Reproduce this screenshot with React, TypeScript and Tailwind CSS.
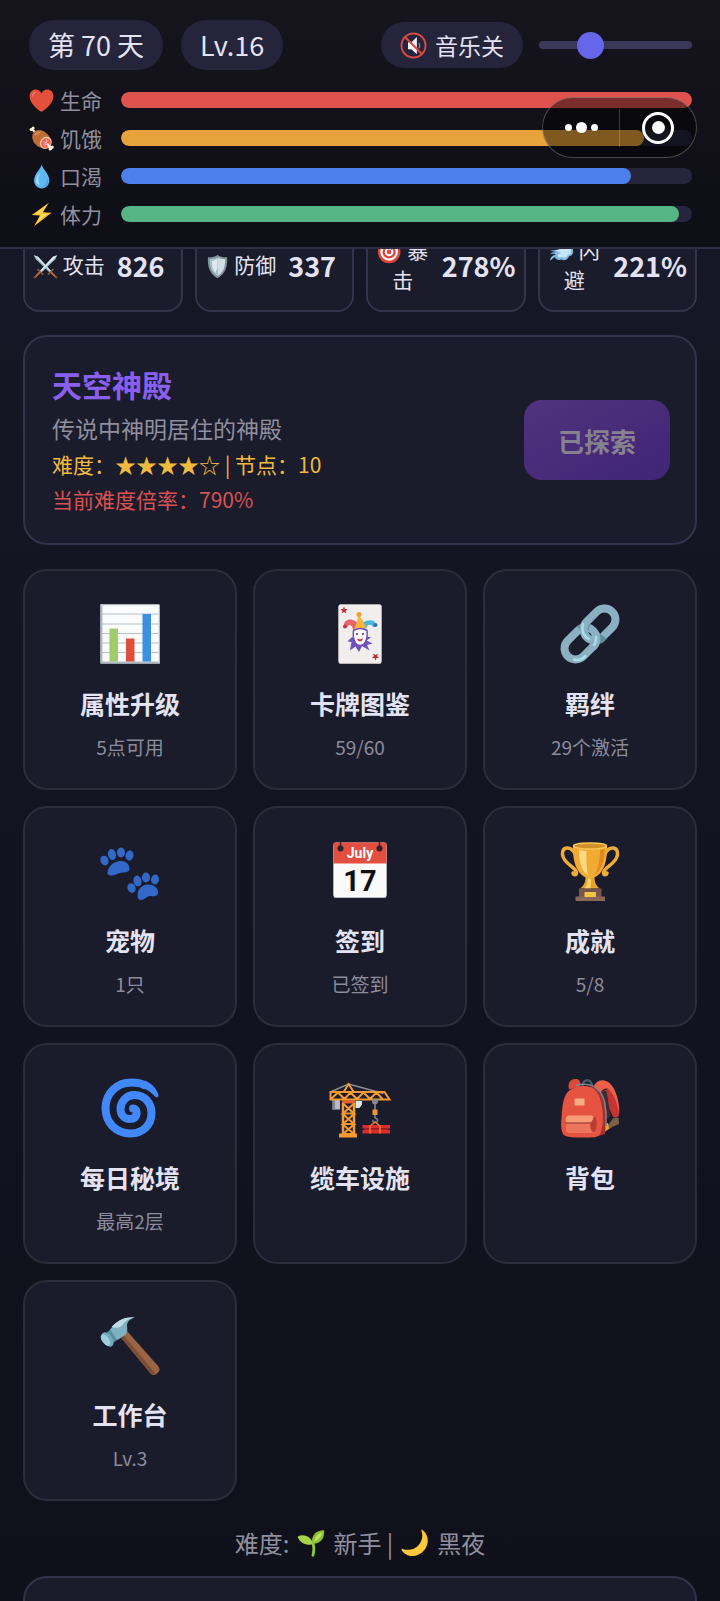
import { useState } from "react";
import type { ReactNode } from "react";

interface IconProps {
  className?: string;
}

interface Vital {
  label: string;
  percent: number;
  color: string;
  icon: ReactNode;
}

interface Stat {
  label: string;
  value: string;
  icon: ReactNode;
}

interface Feature {
  title: string;
  note?: string;
  icon: ReactNode;
}

const Svg = ({ className, children }: IconProps & { children: ReactNode }) => (
  <svg viewBox="0 0 128 128" className={className} fill="none" aria-hidden="true">
    {children}
  </svg>
);

/* ---------- small inline icons ---------- */

const HeartIcon = ({ className }: IconProps) => (
  <Svg className={className}>
    <path fill="#e5503c" d="M64 122C52 116 3 82 3 42 3 20 18 8 34 8c14 0 24 8 30 20C70 16 80 8 94 8c16 0 31 12 31 34 0 40-49 74-61 80z" />
    <path fill="#f27c66" d="M16 38c1-12 9-19 18-18 5 1 4 5 0 6-8 2-10 8-11 14-1 5-7 4-7-2z" />
  </Svg>
);

const MeatIcon = ({ className }: IconProps) => (
  <Svg className={className}>
    <path stroke="#f3e4d3" strokeWidth="11" strokeLinecap="round" d="M16 17l22 22M98 98l17 17" />
    <circle cx="11" cy="18" r="8" fill="#fff3e4" />
    <circle cx="21" cy="10" r="8" fill="#fff3e4" />
    <path fill="#bf6d35" d="M22 35c10-16 34-20 53-8 16 10 36 27 35 45L72 110C52 112 34 98 23 80 15 65 14 48 22 35z" />
    <path fill="#d78a4c" d="M31 38c9-10 24-11 36-4-14 0-26 6-36 18-3-4-3-9 0-14z" />
    <ellipse cx="86" cy="86" rx="29" ry="33" transform="rotate(40 86 86)" fill="#f5c4a8" />
    <ellipse cx="87" cy="87" rx="23" ry="26" transform="rotate(40 87 87)" fill="#ee5c50" />
    <path stroke="#f9c4b0" strokeWidth="4" d="M70 80l34 12M90 66l-8 42M72 98l28-24" />
    <path stroke="#fff3e4" strokeWidth="12" strokeLinecap="round" d="M96 96l14 14" />
    <circle cx="119" cy="108" r="8" fill="#fff3e4" />
    <circle cx="108" cy="118" r="8" fill="#fff3e4" />
  </Svg>
);

const DropIcon = ({ className }: IconProps) => (
  <Svg className={className}>
    <path fill="#5fb8f0" d="M65 3c5 24 39 48 39 82 0 23-17 40-39 40S26 108 26 85C26 51 60 27 65 3z" />
    <path fill="#a5dcfb" d="M56 44c-10 14-20 26-20 42 0 8 4 15 10 19 5 3 9-1 6-6-9-16 0-36 4-55z" />
    <path fill="#3f95d6" d="M93 72c4 22-6 38-24 43 21 2 37-20 24-43z" />
  </Svg>
);

const BoltIcon = ({ className }: IconProps) => (
  <Svg className={className}>
    <path fill="#fdc32f" d="M102 4L14 66l42 3-30 55 89-69-44-3z" />
    <path fill="#fee067" d="M88 18L36 59l30 2-22 40 48-40-36-2z" />
  </Svg>
);

const SwordsIcon = ({ className }: IconProps) => (
  <Svg className={className}>
    <path fill="#8fb0bd" d="M4 6l22 8 68 74-8 8L14 27z" />
    <path fill="#d3e3e8" d="M4 6l22 8 68 74-4 4z" />
    <path fill="#a9c5d0" d="M124 6l-22 8-68 74 8 8 72-69z" />
    <path fill="#dfecf0" d="M124 6l-22 8-68 74 4 4z" />
    <path stroke="#9a5a34" strokeWidth="8" strokeLinecap="round" d="M78 104l25-25M50 104L25 79" />
    <path stroke="#b06b3c" strokeWidth="10" strokeLinecap="round" d="M94 95l22 22M34 95l-22 22" />
    <circle cx="119" cy="119" r="6" fill="#7c4b30" />
    <circle cx="9" cy="119" r="6" fill="#7c4b30" />
  </Svg>
);

const ShieldIcon = ({ className }: IconProps) => (
  <Svg className={className}>
    <path fill="#81949c" d="M64 5c13 10 31 13 49 12 3 50-9 85-49 107C24 102 12 67 15 17c18 1 36-2 49-12z" />
    <path fill="#cfdfe4" d="M64 17c12 7 26 10 39 10 1 40-9 68-39 86z" />
    <path fill="#a8c0ca" d="M64 17C52 24 38 27 25 27c-1 40 9 68 39 86z" />
    <path fill="#dcebef" d="M64 26L36 36c-1 27 4 44 16 60l12-24z" />
  </Svg>
);

const TargetIcon = ({ className }: IconProps) => (
  <Svg className={className}>
    <circle cx="62" cy="66" r="58" fill="#df4238" />
    <circle cx="62" cy="66" r="45" fill="#fff" />
    <circle cx="62" cy="66" r="34" fill="#df4238" />
    <circle cx="62" cy="66" r="22" fill="#fff" />
    <circle cx="62" cy="66" r="12" fill="#df4238" />
    <path stroke="#6d8994" strokeWidth="5" d="M62 66l40-40" />
    <path fill="#4a9fe0" d="M94 25l5-19 9 12 13 6-12 13-16 3z" />
  </Svg>
);

const DashIcon = ({ className }: IconProps) => (
  <Svg className={className}>
    <path fill="#7fbbe0" d="M5 57c28 2 32-3 46-5 0-22 13-39 31-39 12 0 21 7 24 17 11 2 18 12 16 24 6 15-3 34-19 34-7 18-25 25-39 17-14 6-32-1-33-13-13 6-18 17-25 18 0-18 14-29 29-30-10-5-22-3-29-4 9-9 23-9 31-7-11-6-23-8-32-12z" />
    <path fill="#c9e6f6" d="M30 55c17 3 24-1 31-4 0-18 12-29 26-28 9 1 13 7 14 15 10 2 15 11 11 22 4 12-3 21-15 20-7 14-19 18-31 12-10 5-22 1-22-8 1-8 11-12 21-10-10-8-24-10-35-19z" />
  </Svg>
);

const MuteIcon = ({ className }: IconProps) => (
  <Svg className={className}>
    <path fill="#f4f4f5" d="M38 48h16l26-24v82L54 82H38z" />
    <path stroke="#8e9aa2" strokeWidth="5" strokeLinecap="round" d="M90 54c5 7 5 14 0 21" />
    <circle cx="64" cy="64" r="57" stroke="#d94a43" strokeWidth="9" />
    <path stroke="#d94a43" strokeWidth="10" d="M24 24l80 80" />
  </Svg>
);

const SproutIcon = ({ className }: IconProps) => (
  <Svg className={className}>
    <path stroke="#8fc63d" strokeWidth="13" strokeLinecap="round" d="M73 66c6 16 5 34 0 54" />
    <path fill="#a7d34b" d="M3 35c24-14 62-4 71 35C48 76 14 68 3 35z" />
    <path fill="#8cbf35" d="M68 67c-3-38 20-62 56-61 4 38-19 65-56 61z" />
    <path fill="#c1e069" d="M78 58c5-23 18-37 38-43-1 16-16 34-38 43z" />
  </Svg>
);

const MoonIcon = ({ className }: IconProps) => (
  <Svg className={className}>
    <path fill="#fcc73b" d="M97 3c30 20 34 65 9 94-28 35-81 36-103-1-2-4 2-7 5-5 25 9 54 4 72-17 18-21 21-44 13-67-1-4 1-6 4-4z" />
    <path fill="#fddc6c" d="M101 14c12 24 5 58-16 77-20 18-46 22-69 16 28 7 58-1 75-24 16-21 19-47 10-69z" />
  </Svg>
);

/* ---------- feature icons ---------- */

const ChartIcon = ({ className }: IconProps) => (
  <Svg className={className}>
    <path fill="#fafcfd" d="M5 5h118v118H5z" />
    <path stroke="#b3c0c9" strokeWidth="2" d="M5 24h118M5 44h118M5 63h118M5 82h118M5 101h118" />
    <path stroke="#aebbc4" strokeWidth="4" d="M7 5v116h116" />
    <path stroke="#d3dce1" strokeWidth="2" d="M5 6h117v117" />
    <path fill="#a0cb6b" d="M23 53h17v66H23z" />
    <path fill="#dd4f3c" d="M56 73h17v46H56z" />
    <path fill="#3d8fe3" d="M89 24h17v95H89z" />
  </Svg>
);

const JokerIcon = ({ className }: IconProps) => (
  <Svg className={className}>
    <rect x="21" y="5" width="86" height="119" rx="4" fill="#b9b6b5" />
    <rect x="21" y="5" width="86" height="117" rx="4" fill="#f1eeed" />
    <path fill="#c52a36" d="M32 9l2 5h5l-4 4 2 5-5-3-5 3 2-5-4-4h5zM95 117l-2-5h-5l4-4-2-5 5 3 5-3-2 5 4 4h-5z" />
    <path fill="#ea6367" d="M51 61c-1-11-5-17-11-14-1 5-7 6-8 1-1-10 8-15 17-12 9 2 13 9 13 17z" />
    <path fill="#4fb5dc" d="M76 61c0-13 4-18 12-14 2 5 8 4 8-1-1-9-11-11-20-8-9 4-14 9-14 17z" />
    <path fill="#f6b73b" d="M51 56c6-8 7-19 10-29 6 4 13 16 16 28-7-3-18-3-26 1z" />
    <circle cx="62" cy="25" r="5" fill="#ec9f32" />
    <circle cx="34" cy="49" r="4" fill="#ca3642" />
    <circle cx="95" cy="46" r="4" fill="#2d77ae" />
    <path fill="#6f50bf" d="M47 71l-8 8 8 1-3 17 11-8 7 11 6-12 15 9-5-11 11-3-12-6 9-6-15-4z" />
    <path fill="#fff" stroke="#6f50bf" strokeWidth="3" d="M51 57c8-5 19-5 27 0 2 19-5 30-14 30S49 76 51 57z" />
    <circle cx="58" cy="64" r="2" fill="#443052" />
    <circle cx="70" cy="64" r="2" fill="#443052" />
    <path fill="#d63a44" d="M58 73c4 2 8 2 12-1-1 5-3 7-6 7s-5-2-6-6z" />
  </Svg>
);

const LinkIcon = ({ className }: IconProps) => (
  <Svg className={className}>
    <rect x="9" y="61" width="72" height="44" rx="22" transform="rotate(-45 45 83)" stroke="#8bb0c2" strokeWidth="16" />
    <path stroke="#578c98" strokeWidth="16" d="M43 55A22 22 0 0 1 62 52" />
    <rect x="47" y="23" width="72" height="44" rx="22" transform="rotate(-45 83 45)" stroke="#8bb0c2" strokeWidth="16" />
    <path stroke="#578c98" strokeWidth="16" d="M70 77A22 22 0 0 0 91 69" />
    <path stroke="#8bb0c2" strokeWidth="16" d="M75 64A22 22 0 0 1 70 90" />
    <path stroke="#a9dbe8" strokeWidth="5" strokeLinecap="round" d="M50 44A24 24 0 0 0 62 74M76 70A22 22 0 0 1 72 86M32 115c9 3 16 0 23-7" />
  </Svg>
);

const PawsIcon = ({ className }: IconProps) => (
  <Svg className={className}>
    <g fill="#3268c7">
      <ellipse cx="13" cy="43" rx="8" ry="10" transform="rotate(-25 13 43)" />
      <ellipse cx="28" cy="31" rx="8" ry="11" transform="rotate(-12 28 31)" />
      <ellipse cx="46" cy="27" rx="8" ry="10" />
      <ellipse cx="63" cy="33" rx="8" ry="10" transform="rotate(12 63 33)" />
      <path d="M19 66c2-12 13-22 26-22 11 0 18 7 18 15 0 7-7 8-13 8-10 0-14 6-22 6-6 0-10-2-9-7z" />
      <ellipse cx="67" cy="98" rx="8" ry="10" transform="rotate(-25 67 98)" />
      <ellipse cx="79" cy="84" rx="8" ry="11" transform="rotate(-15 79 84)" />
      <ellipse cx="96" cy="77" rx="8" ry="10" />
      <ellipse cx="114" cy="81" rx="8" ry="10" transform="rotate(8 114 81)" />
      <path d="M79 113c0-12 8-22 21-22 12 0 20 7 20 16 0 8-8 8-14 7-9-1-12 8-20 8-5 0-7-4-7-9z" />
    </g>
  </Svg>
);

const CalendarIcon = ({ className }: IconProps) => (
  <Svg className={className}>
    <rect x="11" y="9" width="106" height="109" rx="4" fill="#b7babd" />
    <rect x="11" y="7" width="106" height="109" rx="4" fill="#fafafa" />
    <path fill="#e24e40" d="M15 7h98a4 4 0 0 1 4 4v38H11V11a4 4 0 0 1 4-4z" />
    <circle cx="25" cy="19" r="6" fill="#2f2229" />
    <circle cx="103" cy="19" r="6" fill="#2f2229" />
    <path stroke="#2f2229" strokeWidth="3" d="M25 5v14M103 5v14" />
    <text x="64" y="38" textAnchor="middle" fill="#fff" fontFamily="Roboto, sans-serif" fontWeight="700" fontSize="28">
      July
    </text>
    <text x="64" y="104" textAnchor="middle" fill="#111" fontFamily="Roboto, sans-serif" fontWeight="700" fontSize="58">
      17
    </text>
  </Svg>
);

const TrophyIcon = ({ className }: IconProps) => (
  <Svg className={className}>
    <path stroke="#f0ad35" strokeWidth="7" strokeLinecap="round" d="M34 29C24 12 8 16 9 31c1 18 27 25 28 36 0 6-6 5-7 1M94 29c10-17 26-13 25 2-1 18-27 25-28 36 0 6 6 5 7 1" />
    <path fill="#e9a32f" d="M55 76h18c0 10 3 18 11 23H44c8-5 11-13 11-23z" />
    <path fill="#fbd46c" d="M60 78h6l-1 21h-12c5-6 7-13 7-21z" />
    <path fill="#f3aa33" d="M30 14c18-7 50-7 68 0 1 31-7 60-34 66C37 74 29 45 30 14z" />
    <ellipse cx="64" cy="15" rx="34" ry="6" fill="#d18f2c" />
    <ellipse cx="64" cy="14" rx="33" ry="6" stroke="#fbc755" strokeWidth="3" />
    <path fill="#fbd983" d="M42 22c6 1 10 2 15 2-1 18 0 34 3 49-13-8-18-28-18-51z" />
    <path fill="#df8826" d="M84 22l9-2c0 24-7 44-20 52 8-14 11-30 11-50z" />
    <path fill="#76564b" d="M42 99h45v17H42z" />
    <path fill="#8b675a" d="M35 115h59v9H35z" />
    <path fill="#f4c447" d="M53 106h23v10H53z" />
  </Svg>
);

const SpiralIcon = ({ className }: IconProps) => (
  <Svg className={className}>
    <path fill="#4188fa" d="M94 9c14 6 24 17 27 29 1 5-4 6-7 3-6-7-14-13-24-17z" />
    <path
      stroke="#4188fa"
      strokeWidth="16"
      strokeLinecap="round"
      d="M92 18C85 14 76 13 67 13 37 13 15 35 15 64c0 30 22 51 50 51 26 0 42-18 42-41 0-20-14-36-34-36-16 0-28 13-28 28 0 12 8 20 19 20 9 0 14-6 13-14 0-4-3-7-7-7"
    />
  </Svg>
);

const CraneIcon = ({ className }: IconProps) => (
  <Svg className={className}>
    <path stroke="#8c8d94" strokeWidth="3" d="M7 31l34-15 70 19" />
    <path fill="#b6bcc2" d="M9 48h15v19H9z" />
    <path fill="#7c858e" d="M9 48h5v19H9z" />
    <path stroke="#f49a31" strokeWidth="4" d="M5 32h108l10 15H5zM6 46l14-13 13 13 12-13 13 13 13-13 13 13 13-13 12 13M32 31l9-15 10 15" />
    <path fill="#df632d" d="M28 48h26v7H28z" />
    <path fill="#d7e6e8" d="M55 50h13v7l-5 7h-8z" />
    <path stroke="#f49a31" strokeWidth="5" d="M30 54v63M52 54v63" />
    <path stroke="#f49a31" strokeWidth="4" d="M30 55l22 20H30l22-20M30 76l22 20H30l22-20M30 97l22 19H30l22-19" />
    <path fill="#f49a31" d="M22 115h36v8H22z" />
    <circle cx="94" cy="51" r="6" fill="#848990" />
    <path stroke="#858b94" strokeWidth="3" d="M94 55v29" />
    <path fill="#f2932d" d="M89 67h10v11H89z" />
    <path stroke="#6d8094" strokeWidth="3" d="M94 84c8 2 6 9 0 9-4 0-5-3-4-5" />
    <path fill="#db2c30" d="M69 98h55v7H69zM69 108h55v7H69z" />
    <path fill="#a91f29" d="M72 105h49v3H72z" />
    <path stroke="#f17b2c" strokeWidth="3" d="M84 115v-15l10-8 10 8v15" />
  </Svg>
);

const BackpackIcon = ({ className }: IconProps) => (
  <Svg className={className}>
    <path stroke="#435b68" strokeWidth="5" d="M49 20c0-14 18-16 19 0" />
    <path fill="#d84b37" d="M22 27c-3-13 2-20 12-21 8-1 12 4 11 15z" />
    <path fill="#c43432" d="M88 32c7-6 16-8 23-3 9 14 14 37 11 48-1 6-9 8-13 3z" />
    <path fill="#3b2b35" d="M85 33l12-4 8 51-14 14z" />
    <path fill="#ec604a" d="M72 19C79 7 92 5 103 14c13 12 20 37 19 60-4-22-12-42-22-48-9-4-15 6-18 16z" />
    <path fill="#7d6145" d="M96 103l15-19 10-1 1 13-12 5-12 8z" />
    <path fill="#efa02d" d="M92 96l8-2 2 11-11 9z" />
    <path fill="#a93030" d="M64 21c22 3 30 25 33 50l-3 45-22 7z" />
    <path fill="#e55440" d="M13 43C18 27 36 19 54 20c22 0 30 18 34 43 3 19 2 38-3 51-3 8-13 9-25 9-15 0-35 1-45-3-9-4-10-20-8-37 1-15 2-29 6-40z" />
    <path stroke="#7c8590" strokeWidth="3" d="M36 19c25-8 49 2 57 32 3 15 4 35 3 49" />
    <rect x="33" y="45" width="20" height="14" rx="2" fill="#f6ad83" />
    <rect x="16" y="80" width="59" height="34" rx="7" fill="#ef745c" />
    <path fill="#b83b34" d="M66 84l9-3c3 9 3 25-2 31-9 3-10-18-7-28z" />
    <path fill="#f79b76" d="M22 79h42c5 0 8 2 6 7-2 6-5 7-10 7H20c-7 0-6-13 2-14z" />
    <path stroke="#873932" strokeWidth="2" d="M15 94h49" />
  </Svg>
);

const HammerIcon = ({ className }: IconProps) => (
  <Svg className={className}>
    <path fill="#9a6545" d="M45 48l13-12 63 71c3 4 3 8-1 12-4 5-10 7-14 3z" />
    <path fill="#7e4d35" d="M45 48l5-5 65 78c-4 3-7 3-10 0z" />
    <path fill="#7fb1c1" d="M22 36c8-11 19-22 32-26 7-2 14-2 20-1-11 3-16 9-16 17 1 9 1 13-4 18L39 54c-9 0-17-9-17-18z" />
    <path fill="#c1dce4" d="M27 28C36 18 49 8 71 9c-10 3-17 7-22 15-7 7-15 6-22 4z" />
    <path fill="#568f9f" d="M17 38l9-3 12 19-7 5z" />
    <ellipse cx="19" cy="53" rx="10" ry="16" transform="rotate(-36 19 53)" fill="#72a9bc" />
    <ellipse cx="15" cy="54" rx="7" ry="13" transform="rotate(-36 15 54)" fill="#a0cfdc" />
  </Svg>
);

/* ---------- data ---------- */

const smallIcon = "inline-block size-[25px] shrink-0";
const featureIcon = "size-16";

const vitals: Vital[] = [
  { label: "生命", percent: 100, color: "bg-[#df524d]", icon: <HeartIcon className={smallIcon} /> },
  { label: "饥饿", percent: 91.6, color: "bg-[#e8a23b]", icon: <MeatIcon className={smallIcon} /> },
  { label: "口渴", percent: 89.3, color: "bg-[#4d80ed]", icon: <DropIcon className={smallIcon} /> },
  { label: "体力", percent: 97.7, color: "bg-[#55b585]", icon: <BoltIcon className={smallIcon} /> },
];

const stats: Stat[] = [
  { label: "攻击", value: "826", icon: <SwordsIcon className={smallIcon} /> },
  { label: "防御", value: "337", icon: <ShieldIcon className={smallIcon} /> },
  { label: "暴击", value: "278%", icon: <TargetIcon className={smallIcon} /> },
  { label: "闪避", value: "221%", icon: <DashIcon className={smallIcon} /> },
];

const features: Feature[] = [
  { title: "属性升级", note: "5点可用", icon: <ChartIcon className={featureIcon} /> },
  { title: "卡牌图鉴", note: "59/60", icon: <JokerIcon className={featureIcon} /> },
  { title: "羁绊", note: "29个激活", icon: <LinkIcon className={featureIcon} /> },
  { title: "宠物", note: "1只", icon: <PawsIcon className={featureIcon} /> },
  { title: "签到", note: "已签到", icon: <CalendarIcon className={featureIcon} /> },
  { title: "成就", note: "5/8", icon: <TrophyIcon className={featureIcon} /> },
  { title: "每日秘境", note: "最高2层", icon: <SpiralIcon className={featureIcon} /> },
  { title: "缆车设施", icon: <CraneIcon className={featureIcon} /> },
  { title: "背包", icon: <BackpackIcon className={featureIcon} /> },
  { title: "工作台", note: "Lv.3", icon: <HammerIcon className={featureIcon} /> },
];

/* ---------- sections ---------- */

const VitalRow = ({ label, percent, color, icon }: Vital) => (
  <div className="flex h-[30px] items-center">
    <div className="flex w-[92px] shrink-0 items-center gap-[6px] text-[21px] leading-[30px] text-[#908f9f]">
      {icon}
      <span>{label}</span>
    </div>
    <div className="h-4 flex-1 overflow-hidden rounded-full bg-[#25253c]">
      <div className={`h-full rounded-full ${color}`} style={{ width: `${percent}%` }} />
    </div>
  </div>
);

// Mini-program capsule that floats over the header
const Capsule = () => (
  <div className="absolute top-[97px] right-[23px] flex h-[61px] w-[155px] items-center rounded-full border border-white/25 bg-black/45">
    <button type="button" aria-label="更多" className="flex flex-1 items-center justify-center gap-1">
      <span className="size-[7px] rounded-full bg-white" />
      <span className="size-[11px] rounded-full bg-white" />
      <span className="size-[7px] rounded-full bg-white" />
    </button>
    <span className="h-[38px] w-px bg-white/20" />
    <button type="button" aria-label="关闭" className="flex flex-1 items-center justify-center">
      <span className="flex size-8 items-center justify-center rounded-full border-[3px] border-white">
        <span className="size-[13px] rounded-full bg-white" />
      </span>
    </button>
  </div>
);

const Header = () => {
  const [volume, setVolume] = useState(30);

  return (
    <header className="sticky top-0 z-10 border-b-2 border-[#2f2e46] bg-linear-to-b from-[#16141c] to-[#0e0e17] pt-5 pr-7 pb-[18px] pl-[29px]">
      <div className="flex h-[50px] items-center">
        <span className="rounded-full bg-[#25243b] px-[19px] text-[27px] leading-[50px]">第 70 天</span>
        <span className="ml-[18px] rounded-full bg-[#25243b] px-[19px] text-[27px] leading-[50px]">Lv.16</span>
        <button type="button" className="ml-auto flex h-[46px] items-center gap-2 rounded-full bg-[#25243b] px-[19px] text-[23px]">
          <MuteIcon className="size-[27px]" />
          音乐关
        </button>
        <input
          type="range"
          aria-label="音量"
          value={volume}
          onChange={(e) => setVolume(Number(e.target.value))}
          className="ml-4 h-2 w-[153px] appearance-none rounded-full bg-[#3a395a] [&::-webkit-slider-thumb]:size-[27px] [&::-webkit-slider-thumb]:appearance-none [&::-webkit-slider-thumb]:rounded-full [&::-webkit-slider-thumb]:bg-[#6666ea]"
        />
      </div>
      <div className="mt-[15px] flex flex-col gap-2">
        {vitals.map((v) => (
          <VitalRow key={v.label} {...v} />
        ))}
      </div>
      <Capsule />
    </header>
  );
};

const StatCard = ({ label, value, icon }: Stat) => (
  <div className="flex h-[90px] items-center gap-3 rounded-2xl border-2 border-[#33334a] bg-[#1a1b2b] px-2 pb-[2px]">
    <span className="min-w-0 pb-1 text-center text-[21px] leading-[30px]">
      {icon} {label}
    </span>
    <span className="shrink-0 text-[27px] font-bold">{value}</span>
  </div>
);

const LocationCard = () => (
  <section className="flex items-center justify-between rounded-3xl border-2 border-[#33344b] bg-[#1a1b2b] py-6 pr-[25px] pl-[27px]">
    <div>
      <h2 className="text-[30px] leading-[46px] font-bold text-[#8960ee]">天空神殿</h2>
      <p className="text-[23px] leading-[42px] text-[#908f9f]">传说中神明居住的神殿</p>
      <p className="text-[21px] leading-[30px] text-[#f0b93f]">难度：★★★★☆ | 节点：10</p>
      <p className="text-[21px] leading-10 text-[#d95252]">当前难度倍率：790%</p>
    </div>
    <button
      type="button"
      disabled
      className="h-20 rounded-[18px] bg-linear-to-br from-[#50337d] to-[#402476] px-[34px] text-[26px] font-bold text-[#85818f]"
    >
      已探索
    </button>
  </section>
);

const FeatureCard = ({ title, note, icon }: Feature) => (
  <button
    type="button"
    className="flex h-[221px] flex-col items-center rounded-3xl border-2 border-[#2d2d3a] bg-[#1a1b2b] pt-[31px]"
  >
    {icon}
    <span className="mt-[19px] text-[25px] leading-9 font-bold">{title}</span>
    {note && <span className="mt-3 text-[19px] leading-7 text-[#8d8c9d]">{note}</span>}
  </button>
);

export default function App() {
  return (
    <div className="h-screen overflow-hidden bg-linear-to-b from-[#181728] to-[#10101a] font-['Noto_Sans_CJK_SC',sans-serif] text-[#e3e3f3]">
      <Header />
      {/* first row is scrolled partly under the header */}
      <main className="-mt-[27px] flex flex-col px-[23px]">
        <section className="grid grid-cols-4 gap-3">
          {stats.map((s) => (
            <StatCard key={s.label} {...s} />
          ))}
        </section>
        <div className="mt-[23px]">
          <LocationCard />
        </div>
        <section className="mt-6 grid grid-cols-3 gap-4">
          {features.map((f) => (
            <FeatureCard key={f.title} {...f} />
          ))}
        </section>
        <p className="mt-6 flex items-center justify-center gap-2 text-2xl leading-9 text-[#908f9f]">
          难度: <SproutIcon className="size-7" /> 新手 | <MoonIcon className="size-7" /> 黑夜
        </p>
        <section className="mt-[15px] h-24 rounded-3xl border-2 border-[#33344a] bg-[#1a1b2b]" />
      </main>
    </div>
  );
}
